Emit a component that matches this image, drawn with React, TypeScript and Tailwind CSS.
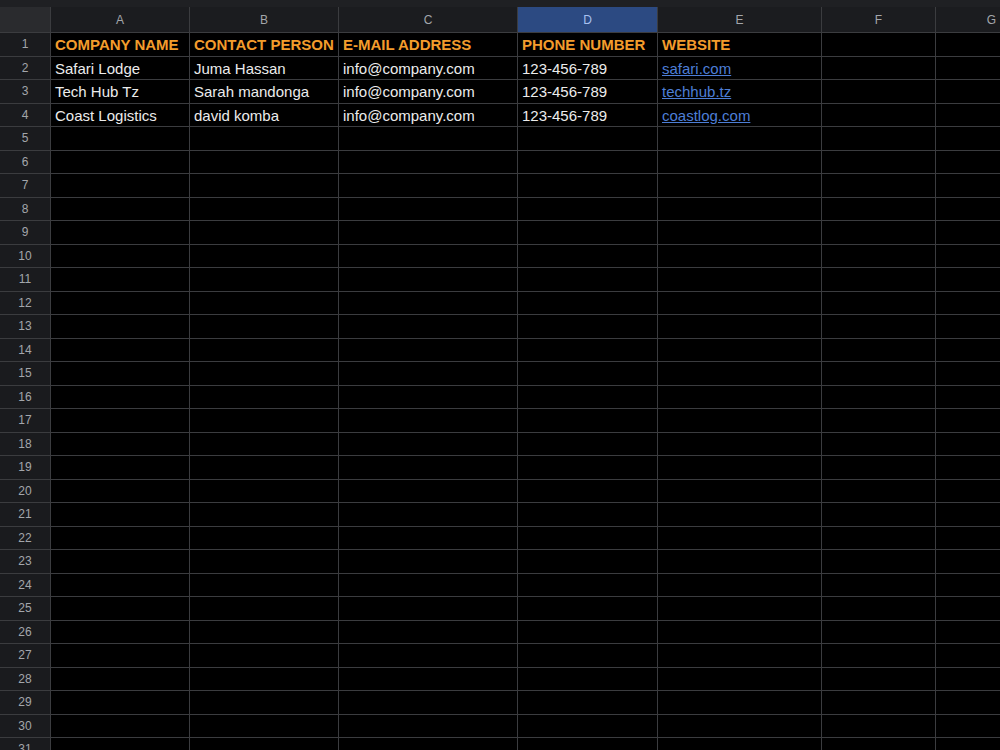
import React from "react";

const columns = ["A", "B", "C", "D", "E", "F", "G"];

interface Contact {
  company: string;
  person: string;
  email: string;
  phone: string;
  website: string;
}

const contacts: Contact[] = [
  { company: "Safari Lodge", person: "Juma Hassan", email: "info@company.com", phone: "123-456-789", website: "safari.com" },
  { company: "Tech Hub Tz", person: "Sarah mandonga", email: "info@company.com", phone: "123-456-789", website: "techhub.tz" },
  { company: "Coast Logistics", person: "david komba", email: "info@company.com", phone: "123-456-789", website: "coastlog.com" },
];

const headers = ["COMPANY NAME", "CONTACT PERSON", "E-MAIL ADDRESS", "PHONE NUMBER", "WEBSITE"];

const TOTAL_ROWS = 31;

const cell = "border-r border-b border-[#3b3c3f] h-[23.5px] px-1 pt-[2px] flex items-center whitespace-nowrap overflow-hidden";

const rowCells = (row: number): React.ReactNode[] => {
  if (row === 1) {
    return [...headers, "", ""].map((h, i) => (
      <div key={i} className={`${cell} font-bold text-[#f39c2c] text-[15px]`}>{h}</div>
    ));
  }
  const c = contacts[row - 2];
  if (c) {
    return [
      <div key="a" className={cell}>{c.company}</div>,
      <div key="b" className={cell}>{c.person}</div>,
      <div key="c" className={cell}>{c.email}</div>,
      <div key="d" className={cell}>{c.phone}</div>,
      <div key="e" className={`${cell} text-[#4d7ed6] underline`}>{c.website}</div>,
      <div key="f" className={cell} />,
      <div key="g" className={cell} />,
    ];
  }
  return columns.map((col) => <div key={col} className={cell} />);
};

export default function App() {
  return (
    <div
      className="w-[1000px] h-[750px] overflow-hidden bg-black text-[15px] text-[#ececec]"
      style={{ fontFamily: '"Liberation Sans", Arial, sans-serif' }}
    >
      {/* top toolbar strip */}
      <div className="h-[7px] bg-[#1f2023]" />

      <div className="grid grid-cols-[51px_139px_149px_179px_140px_164px_114px_112px]">
        {/* column headers */}
        <div className="h-[26px] bg-[#2a2b2e] border-r border-b border-[#3b3c3f]" />
        {columns.map((col) => (
          <div
            key={col}
            className={
              col === "D"
                ? "h-[26px] bg-[#2c4a82] border-r border-b border-[#3b3c3f] flex items-center justify-center text-[12px] text-[#a9c1ef]"
                : "h-[26px] bg-[#1b1c1f] border-r border-b border-[#3b3c3f] flex items-center justify-center text-[12px] text-[#a3a6ab]"
            }
          >
            {col}
          </div>
        ))}

        {Array.from({ length: TOTAL_ROWS }, (_, i) => i + 1).map((row) => (
          <React.Fragment key={row}>
            <div className="h-[23.5px] bg-[#1a1b1e] border-r border-b border-[#3b3c3f] flex items-center justify-center text-[12px] text-[#a3a6ab]">
              {row}
            </div>
            {rowCells(row)}
          </React.Fragment>
        ))}
      </div>
    </div>
  );
}
